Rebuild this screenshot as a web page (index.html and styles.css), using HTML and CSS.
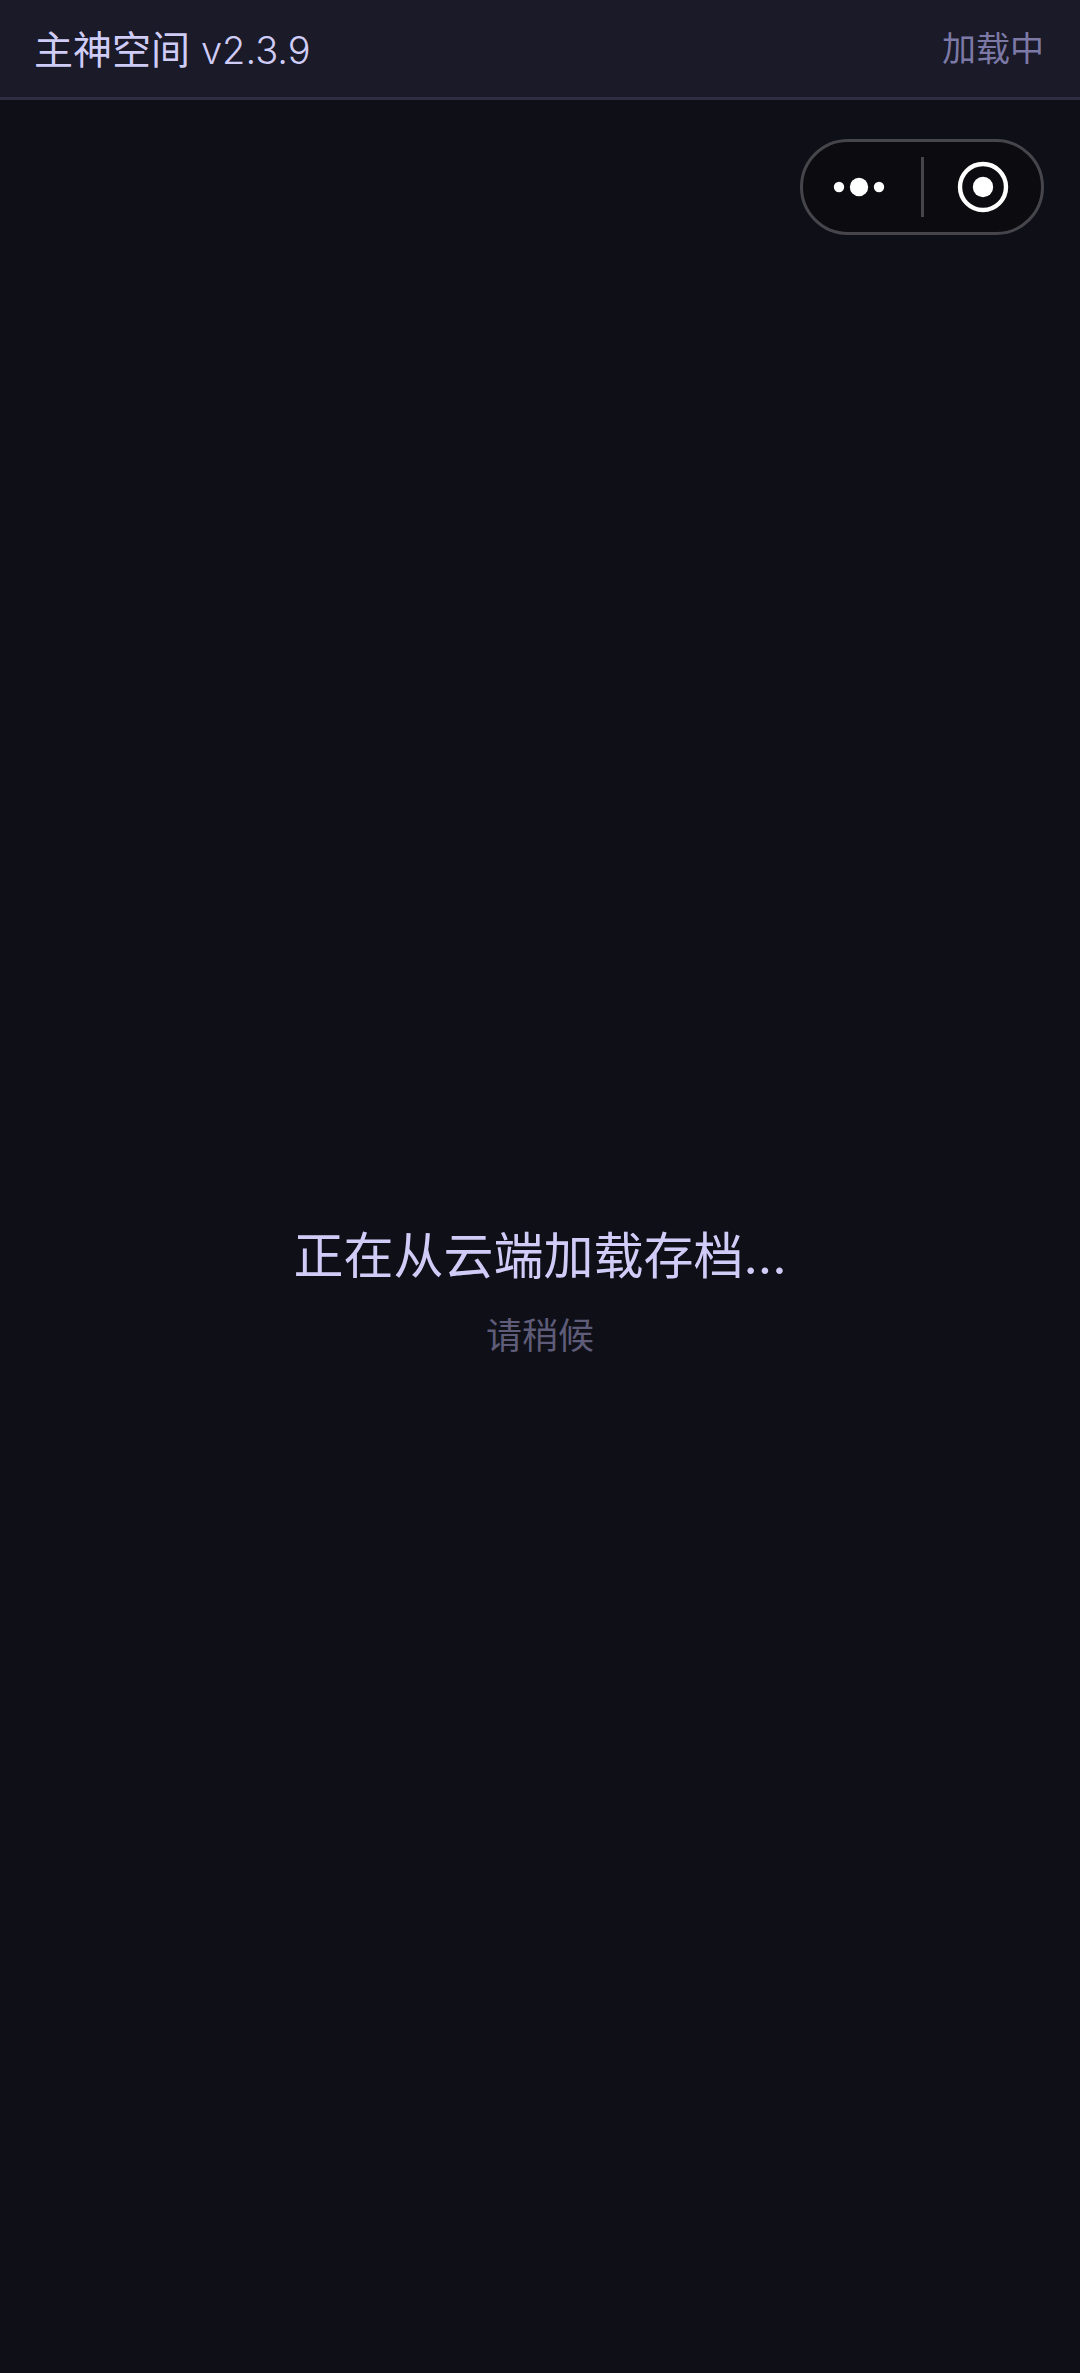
FILE: index.html
```html
<!DOCTYPE html>
<html lang="zh-CN">
  <head>
    <title>主神空间</title>
    <meta charset="utf-8">
    <meta name="viewport" content="width=device-width, initial-scale=1">
    <link rel="stylesheet" href="styles.css">
  </head>
  <body>
    <div id="container">
      <header id="page-header">
        <h1 id="page-title">主神空间 <span class="version">v2.3.9</span></h1>
        <span id="page-status">加载中</span>
      </header>
      <div id="capsule">
        <button class="capsule-btn capsule-more" type="button" aria-label="更多">
          <svg width="66" height="24" viewBox="0 0 66 24">
            <circle cx="10" cy="12" r="5.2" fill="#fff"/>
            <circle cx="30" cy="12" r="9.2" fill="#fff"/>
            <circle cx="50" cy="12" r="5.2" fill="#fff"/>
          </svg>
        </button>
        <span class="capsule-line"></span>
        <button class="capsule-btn capsule-close" type="button" aria-label="关闭">
          <svg width="52" height="52" viewBox="0 0 52 52">
            <circle cx="26" cy="26" r="23" fill="none" stroke="#fff" stroke-width="4.4"/>
            <circle cx="26" cy="26" r="10.2" fill="#fff"/>
          </svg>
        </button>
      </div>
      <main id="page-main">
        <p id="load-title">正在从云端加载存档...</p>
        <p id="load-sub">请稍候</p>
      </main>
    </div>
  </body>
</html>
```

FILE: styles.css
```css
:root {
  --bg: #0f0f17;
  --bar: #1a1a28;
  --line: #2e2e42;
  --title: #d0ccf8;
  --status: #7c79a6;
  --muted: #5e5c78;
}
* {
  box-sizing: border-box;
}
html,
body {
  margin: 0;
  height: 100%;
}
body {
  font-family: "Inter", "Noto Sans CJK SC", sans-serif;
  font-weight: 400;
  background-color: var(--bg);
}
#container {
  position: relative;
  display: flex;
  flex-direction: column;
  height: 2373px;
}
#page-header {
  display: flex;
  flex: none;
  align-items: center;
  justify-content: space-between;
  height: 100px;
  padding: 0 36px 0 34px;
  background-color: var(--bar);
  border-bottom: 3px solid var(--line);
}
#page-title {
  margin: 0;
  padding-top: 2px;
  font-size: 39px;
  font-weight: 400;
  line-height: 94px;
  color: var(--title);
}
.version {
  font-size: 38px;
  font-weight: 300;
}
#page-status {
  font-size: 34px;
  line-height: 96px;
  color: var(--status);
}
#capsule {
  position: absolute;
  top: 139px;
  left: 800px;
  display: flex;
  align-items: center;
  width: 244px;
  height: 96px;
  background-color: #0b0b10;
  border: 3px solid #45454b;
  border-radius: 48px;
}
.capsule-btn {
  display: flex;
  align-items: center;
  justify-content: center;
  padding: 0;
  background: none;
  border: 0;
}
.capsule-more {
  width: 118px;
}
.capsule-close {
  flex: 1;
}
.capsule-line {
  flex: none;
  width: 3px;
  height: 60px;
  background-color: #45454b;
}
#page-main {
  padding-top: 1121px;
  text-align: center;
}
#load-title {
  margin: 0;
  font-size: 50px;
  line-height: 70px;
  color: var(--title);
}
#load-sub {
  margin: 20px 0 0;
  font-size: 36px;
  line-height: 50px;
  color: var(--muted);
}
```
